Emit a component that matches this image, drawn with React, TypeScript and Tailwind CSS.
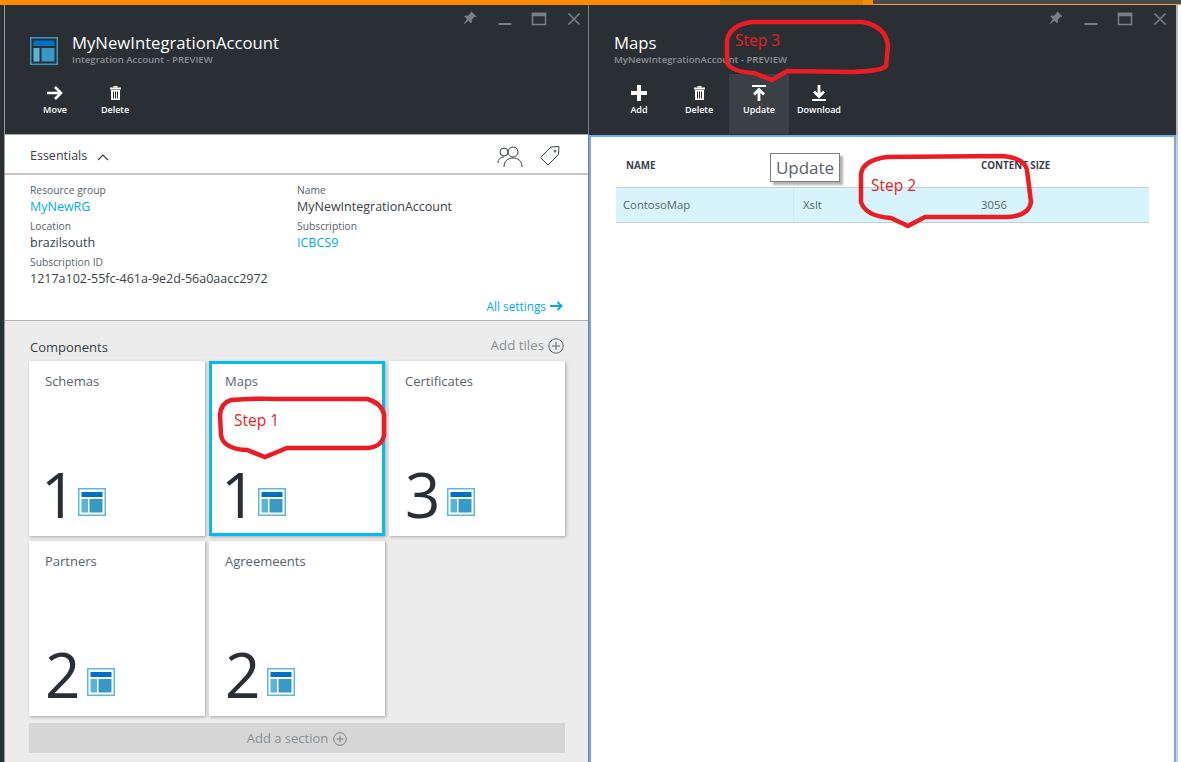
import React from "react";

const TileIcon = ({ size = 28 }: { size?: number }) => (
  <svg width={size} height={size} viewBox="0 0 28 28" className="shrink-0">
    <rect x="0" y="0" width="28" height="28" fill="#5db8df" />
    <rect x="1.5" y="1.5" width="25" height="25" fill="#ffffff" />
    <rect x="3.5" y="4" width="21" height="5" fill="#0072c6" />
    <rect x="3.5" y="11" width="6.5" height="13.5" fill="#59b4d9" />
    <rect x="11.5" y="11" width="13" height="13.5" fill="#3999c6" />
  </svg>
);

const WindowControls = ({ pr }: { pr: string }) => (
  <div className={`flex items-center justify-end h-[26px] pt-[1px] ${pr}`}>
    <svg width="16" height="16" viewBox="0 0 16 16" fill="#7b7f83" className="mr-[20px] -translate-y-[1px]">
      <path d="M9.5 1.5l5 5-1.2.6-.6-.4-3 3 .2 2.6-1 1-2.6-2.6L2 14.2l-.4-.2 3.3-4.9L2.3 6.5l1-1 2.6.2 3-3-.3-.6z" />
    </svg>
    <svg width="14" height="14" viewBox="0 0 14 14" fill="#7b7f83" className="mr-[19px]"><rect x="0.5" y="11" width="13" height="2" /></svg>
    <svg width="16" height="14" viewBox="0 0 16 14" fill="none" stroke="#7b7f83" strokeWidth="1.5" className="mr-[20px]">
      <rect x="1.5" y="1.5" width="13" height="11" />
      <rect x="1.5" y="1.5" width="13" height="2" fill="#7b7f83" />
    </svg>
    <svg width="14" height="14" viewBox="0 0 14 14" stroke="#7b7f83" strokeWidth="1.6"><path d="M1.5 1.5l11 11M12.5 1.5l-11 11" /></svg>
  </div>
);

const Cmd = ({ label, icon, active }: { label: string; icon: React.ReactNode; active?: boolean }) => (
  <div className={`w-[60px] h-[60px] flex flex-col items-center pt-[9px] ${active ? "bg-[#3b4045]" : ""}`}>
    <div className="h-[20px] flex items-center justify-center">{icon}</div>
    <div className="text-[9px] font-semibold text-white leading-[14px] whitespace-nowrap">{label}</div>
  </div>
);

const Trash = () => (
  <svg width="11" height="14" viewBox="0 0 11 14" fill="#ffffff">
    <rect x="3.5" y="0" width="4" height="1.5" />
    <rect x="0" y="1.5" width="11" height="2" />
    <path d="M1 4h9v10H1zM3 5.5v7h1v-7zM5 5.5v7h1v-7zM7 5.5v7h1v-7z" fillRule="evenodd" />
  </svg>
);

const Field = ({ label, value, link }: { label: string; value: string; link?: boolean }) => (
  <div className="h-[36px]">
    <div className="text-[10.3px] leading-[16px] text-[#59636b] pt-[1px]">{label}</div>
    <div className={`text-[12.5px] leading-[18px] whitespace-nowrap ${link ? "text-[#00abec]" : "text-[#3a4148]"}`}>{value}</div>
  </div>
);

const Tile = ({ title, n, selected }: { title: string; n: number; selected?: boolean }) => (
  <div className={`relative bg-white h-[175px] shadow-[1px_1px_3px_rgba(0,0,0,0.3)] flex flex-col justify-between ${selected ? "border-[3px] border-[#00bcf2] pl-[13px] pt-[9px] pb-[3px]" : "pl-[16px] pt-[12px] pb-[6px]"}`}>
    <div className="text-[13px] leading-[16px] text-[#59636b]">{title}</div>
    <div className="flex items-end h-[72px]">
      <div className={`text-[62px] font-medium leading-[72px] text-[#2a2f35] ${n === 1 ? "w-[33px] -indent-[4px]" : "w-[42px]"}`}>{n}</div>
      <div className="mb-[14px]"><TileIcon /></div>
    </div>
  </div>
);

const Callout = ({ className, w, h, d, label, tx, ty }: { className: string; w: number; h: number; d: string; label: string; tx: number; ty: number }) => (
  <div className={`absolute ${className}`} style={{ width: w, height: h }}>
    <svg width={w} height={h} viewBox={`0 0 ${w} ${h}`} fill="none" stroke="#ed1c24" strokeWidth="4.5" className="absolute inset-0">
      <path d={d} />
    </svg>
    <span className="absolute text-[15.5px] leading-[18px] text-[#ed1c24] whitespace-nowrap" style={{ left: tx, top: ty }}>{label}</span>
  </div>
);

export default function App() {
  return (
    <div className="relative w-[1181px] h-[762px] overflow-hidden bg-white font-['Open_Sans','Noto_Sans',sans-serif]">
      {/* top strip */}
      <div className="flex h-[5px]">
        <div className="w-[720px] bg-[#ff8c00]" />
        <div className="w-[143px] bg-[#e08000]" />
        <div className="w-[10px] bg-[#ff8c00]" />
        <div className="flex-1 bg-[#4a4a4a] border-b-[1px] border-[#f0a040]" />
      </div>
      <div className="flex h-[757px]">
        <div className="w-[4px] bg-[#2a2f33]" />
        <div className="w-[1px] bg-[#9a9a9a]" />
        {/* left blade */}
        <div className="w-[583px] flex flex-col bg-[#ececec]">
          <div className="h-[130px] bg-[#2a2f33] border-b-[1px] border-[#a8a8a8]">
            <WindowControls pr="pr-[7px]" />
            <div className="flex items-start pl-[25px] h-[36px] mt-[2px]">
              <svg width="28" height="28" viewBox="0 0 28 28" className="shrink-0 mr-[14px] mt-[4px]">
                <rect width="28" height="28" fill="#3999c6" />
                <rect x="1.5" y="1.5" width="25" height="25" fill="#2a2f33" />
                <rect x="3.5" y="3.5" width="21" height="5.5" fill="#0072c6" />
                <rect x="3.5" y="11" width="6" height="13.5" fill="#59b4d9" />
                <rect x="11.5" y="11" width="13" height="13.5" fill="#3999c6" />
              </svg>
              <div>
                <div className="text-[16.7px] leading-[20px] text-white whitespace-nowrap">MyNewIntegrationAccount</div>
                <div className="text-[9.6px] font-semibold leading-[13px] text-[#8b9095] whitespace-nowrap">Integration Account - PREVIEW</div>
              </div>
            </div>
            <div className="flex pl-[20px] mt-[5px]">
              <Cmd label="Move" icon={
                <svg width="16" height="14" viewBox="0 0 16 14" fill="none" stroke="#fff" strokeWidth="2.6"><path d="M0 7h14M8 1l6 6-6 6" /></svg>
              } />
              <Cmd label="Delete" icon={<Trash />} />
            </div>
          </div>
          <div className="h-[40px] bg-white border-b-[2px] border-[#c4c4c4] flex items-center pl-[25px] pr-[27px] pt-[5px]">
            <span className="text-[12.5px] text-[#3a4148]">Essentials</span>
            <svg width="12" height="8" viewBox="0 0 12 8" fill="none" stroke="#3a4148" strokeWidth="1.1" className="ml-[10px]"><path d="M1 7l5-5 5 5" /></svg>
            <div className="flex-1" />
            <svg width="26" height="22" viewBox="0 0 26 22" fill="none" stroke="#3a4148" strokeWidth="1" className="mr-[15px] -translate-x-[1px] -translate-y-[1px]">
              <circle cx="7" cy="7" r="4" /><circle cx="16" cy="7" r="5" />
              <path d="M1 18c0-4 3-6 6-6M7 22c0-6 4-9 9-9s9 3 9 9" />
            </svg>
            <svg width="22" height="22" viewBox="0 0 22 22" fill="none" stroke="#3a4148" strokeWidth="1" className="-translate-y-[1px]">
              <path d="M1.5 12.5L12 2l8-.5-.5 8L9 20z" /><circle cx="16" cy="6" r="1" />
            </svg>
          </div>
          <div className="h-[146px] bg-white border-b-[1px] border-[#b0b0b0] pl-[25px] pr-[25px] pt-[6px] relative flex flex-col">
            <div className="grid grid-cols-[267px_1fr]">
              <Field label="Resource group" value="MyNewRG" link />
              <Field label="Name" value="MyNewIntegrationAccount" />
              <Field label="Location" value="brazilsouth" />
              <Field label="Subscription" value="ICBCS9" link />
              <Field label="Subscription ID" value="1217a102-55fc-461a-9e2d-56a0aacc2972" />
            </div>
            <div className="flex items-center justify-end mt-[8px] text-[11.8px] leading-[18px] text-[#00abec]">
              All settings
              <svg width="13" height="10" viewBox="0 0 13 10" fill="none" stroke="#00abec" strokeWidth="1.8" className="ml-[4px]"><path d="M0 5h11.5M7.5 1l4 4-4 4" /></svg>
            </div>
          </div>
          <div className="flex-1 pl-[24px] pr-[23px] flex flex-col">
            <div className="flex items-center justify-between h-[40px] pt-[11px]">
              <span className="text-[13px] text-[#3a4148] mt-[3px] ml-[1px]">Components</span>
              <span className="flex items-center text-[13.3px] text-[#8a8f94] -mt-[1px]">
                Add tiles
                <svg width="16" height="16" viewBox="0 0 16 16" fill="none" stroke="#5f656b" className="ml-[5px] -translate-x-[1px]"><circle cx="8" cy="8" r="7.2" /><path d="M4 8h8M8 4v8" /></svg>
              </span>
            </div>
            <div className="grid grid-cols-[176px_176px_176px] gap-x-[4px] gap-y-[5px]">
              <Tile title="Schemas" n={1} />
              <Tile title="Maps" n={1} selected />
              <Tile title="Certificates" n={3} />
              <Tile title="Partners" n={2} />
              <Tile title="Agreemeents" n={2} />
            </div>
            <div className="mt-[7px] h-[30px] pt-[1px] bg-[#d6d6d6] flex items-center justify-center text-[13px] text-[#8a8f94] w-[536px]">
              Add a section
              <svg width="14" height="14" viewBox="0 0 14 14" fill="none" stroke="#7a7f84" className="ml-[5px]"><circle cx="7" cy="7" r="6.3" /><path d="M3.5 7h7M7 3.5v7" /></svg>
            </div>
          </div>
        </div>
        <div className="w-[1px] bg-[#7e8184]" />
        {/* right blade */}
        <div className="flex-1 flex flex-col">
          <div className="h-[130px] w-[589px] bg-[#2a2f33] pl-[25px] border-r-[2px] border-[#b8b8b8]">
            <WindowControls pr="pr-[9px]" />
            <div className="h-[36px] mt-[2px]">
              <div className="text-[16.7px] leading-[20px] text-white">Maps</div>
              <div className="text-[9.6px] font-semibold leading-[13px] text-[#8b9095] whitespace-nowrap">MyNewIntegrationAccount - PREVIEW</div>
            </div>
            <div className="flex -ml-[5px] mt-[5px]">
              <Cmd label="Add" icon={
                <svg width="16" height="16" viewBox="0 0 16 16" fill="#fff"><rect x="6" y="0" width="4" height="16" /><rect x="0" y="6" width="16" height="4" /></svg>
              } />
              <Cmd label="Delete" icon={<Trash />} />
              <Cmd label="Update" active icon={
                <svg width="14" height="16" viewBox="0 0 14 16" fill="none" stroke="#fff"><path d="M0 1h14" strokeWidth="2" /><path d="M7 16V5M2 9.5l5-5 5 5" strokeWidth="2.8" /></svg>
              } />
              <Cmd label="Download" icon={
                <svg width="14" height="16" viewBox="0 0 14 16" fill="none" stroke="#fff"><path d="M0 15h14" strokeWidth="2" /><path d="M7 0v11M2 6.5l5 5 5-5" strokeWidth="2.8" /></svg>
              } />
            </div>
          </div>
          <div className="flex-1 w-[589px] flex">
            <div className="flex-1 border-t-[2px] border-x-[2px] border-[#75a7f5] px-[25px] bg-white">
              <div className="grid grid-cols-[178px_187px_1fr] h-[50px] items-center pt-[8px] text-[9.8px] font-bold text-[#3a4148]">
                <span className="pl-[10px]">NAME</span>
                <span />
                <span>CONTENT SIZE</span>
              </div>
              <div className="grid grid-cols-[178px_187px_1fr] h-[36px] items-center bg-[#d7f4fd] border-y-[1px] border-[#c6d0d4] text-[11.3px] text-[#59636b]">
                <span className="pl-[7px] border-r-[1px] border-[#cfe8f0] h-full flex items-center">ContosoMap</span>
                <span className="pl-[9px]">Xslt</span>
                <span>3056</span>
              </div>
            </div>
            <div className="w-[2px] bg-[#cccccc]" />
          </div>
        </div>
      </div>

      {/* annotations */}
      <div className="absolute left-[770px] top-[153px] w-[70px] h-[29px] bg-white border-[1px] border-[#7d7d7d] shadow-[3px_3px_2px_rgba(0,0,0,0.3)] flex items-center justify-center text-[17px] text-[#59636b]">Update</div>
      <Callout className="left-[217px] top-[395px]" w={170} h={68} label="Step 1" tx={17} ty={16}
        d="M14 5 Q40 3 60 4 L150 4 Q165 8 167 20 L167 40 Q165 52 150 53 L70 53 L48 62 L30 55 Q6 54 4 40 L3 20 Q4 8 14 5Z" />
      <Callout className="left-[722px] top-[18px]" w={170} h={68} label="Step 3" tx={13} ty={13}
        d="M5 22 Q8 7 30 4 L140 4 Q164 8 166 28 L164 48 Q160 53 130 54 L65 53 L50 62 L32 55 Q10 54 5 45 Z" />
      <Callout className="left-[857px] top-[152px]" w={178} h={80} label="Step 2" tx={14} ty={24}
        d="M4 22 Q6 8 30 5 L145 4 Q168 6 170 18 L174 50 Q172 64 150 65 L68 65 L51 74 L34 66 Q8 64 4 50 Z" />
    </div>
  );
}
